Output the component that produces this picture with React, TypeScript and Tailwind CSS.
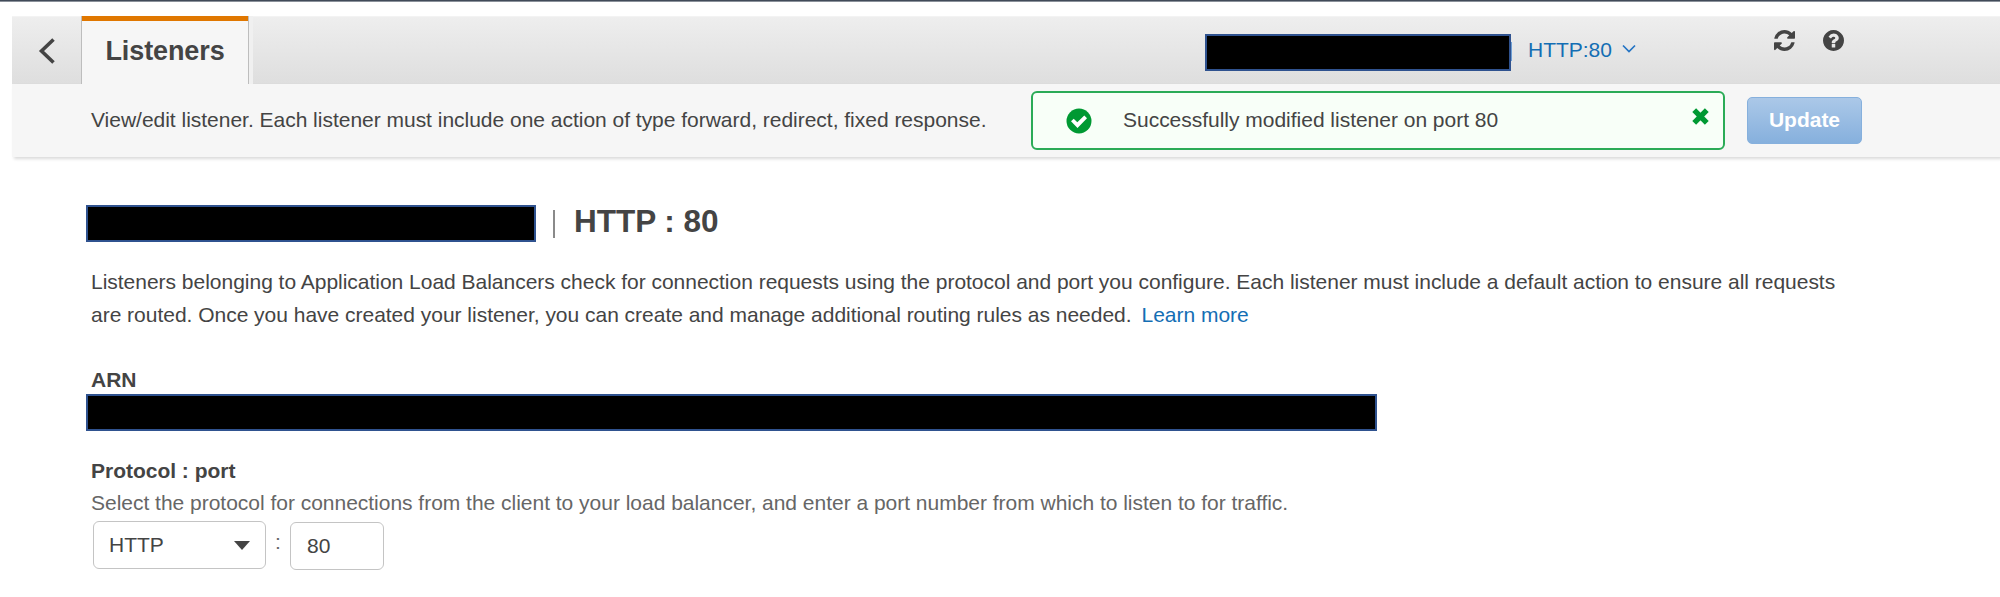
import React from "react";

function Redacted({ className }: { className: string }) {
  return <div className={`h-[37px] shrink-0 border-2 border-[#2f528f] bg-black ${className}`} />;
}

function RefreshIcon() {
  return (
    <svg className="size-[21px]" viewBox="0 0 1536 1536" fill="#444">
      <path d="M1511 928q0 5-1 7-64 268-268 434.500T764 1536q-146 0-282.500-55T238 1324l-129 129q-19 19-45 19t-45-19-19-45V960q0-26 19-45t45-19h448q26 0 45 19t19 45-19 45l-137 137q71 66 161 102t187 36q134 0 250-65t186-179q11-17 53-117 8-23 30-23h192q13 0 22.500 9.500t9.500 22.500zm25-800v448q0 26-19 45t-45 19h-448q-26 0-45-19t-19-45 19-45l138-138Q969 256 768 256q-134 0-250 65T332 500q-11 17-53 117-8 23-30 23H50q-13 0-22.500-9.500T18 608v-7q65-268 270-434.500T768 0q146 0 284 55.500T1297 212l130-129q19-19 45-19t45 19 19 45z" />
    </svg>
  );
}

function HelpIcon() {
  return (
    <svg className="size-[21px]" viewBox="0 0 1536 1536" fill="#444">
      <path d="M896 1248v-192q0-14-9-23t-23-9H672q-14 0-23 9t-9 23v192q0 14 9 23t23 9h192q14 0 23-9t9-23zm256-672q0-88-55.500-163T958 297t-170-41q-243 0-371 213-15 24 8 42l132 100q7 6 19 6 16 0 25-12 53-68 86-92 34-24 86-24 48 0 85.500 26t37.500 59q0 38-20 61t-68 45q-63 28-115.500 86.500T640 892v36q0 14 9 23t23 9h192q14 0 23-9t9-23q0-19 21.500-49.500T972 829q32-18 49-28.500t46-35 44.500-48 28-60.500 12.500-81zm384 192q0 209-103 385.500T1153.500 1433 768 1536t-385.500-103T103 1153.500 0 768t103-385.500T382.500 103 768 0t385.500 103T1433 382.500 1536 768z" />
    </svg>
  );
}

function Header() {
  return (
    <div className="flex h-[68px] border-t border-[#f3f3f3] bg-linear-to-b from-[#eeeeee] to-[#dedede]">
      <button className="flex h-[67px] w-[69px] items-center justify-center">
        <svg className="mt-px ml-[2px] size-[26px]" viewBox="0 0 26 26" fill="none" stroke="#444" strokeWidth="3.6">
          <path d="M18.500 1.500 6.500 13l12 11.500" />
        </svg>
      </button>
      <div className="-mt-px flex h-[68px] w-[168px] justify-center border-x border-x-[#bdbdbd] bg-[#f6f6f6]">
        <div className="flex w-full items-center justify-center border-t-[5px] border-[#e07700] pb-[4px]">
          <h1 className="text-[27px] leading-[34px] font-bold tracking-[-0.1px] text-[#444]">Listeners</h1>
        </div>
      </div>
      <div className="-mt-px h-[68px] w-1 bg-[#f0f0f0]" />
      <div className="ml-[952px] mt-[17px] flex h-[37px] items-start">
        <Redacted className="w-[306px]" />
        <div className="mt-2 h-[19px] w-px bg-[#6f9fd4]" />
        <a className="ml-4 mt-[3px] text-[21px] leading-[26px] text-[#146eb4]">HTTP:80</a>
        <svg className="ml-[10px] mt-[10px] h-[10px] w-[14px]" viewBox="0 0 14 10" fill="none" stroke="#2474c4" strokeWidth="1.700">
          <path d="M1 1.500l6 6 6-6" />
        </svg>
      </div>
      <div className="ml-[138px] mt-[13px] flex gap-[28px]">
        <RefreshIcon />
        <HelpIcon />
      </div>
    </div>
  );
}

function Toolbar() {
  return (
    <div className="flex h-[73px] items-start bg-[#f6f6f6] shadow-[2px_2px_3px_rgba(0,0,0,0.15)]">
      <p className="ml-[79px] mt-[23px] w-[940px] text-[21px] leading-[26px]">
        <span>View/edit listener. Each listener must include one action of type forward, redirect, fixed response.</span>
      </p>
      <div className="mt-[7px] flex h-[59px] w-[694px] items-start rounded-[6px] border-2 border-[#2bab57] bg-[#f8fff8]">
        <svg className="ml-[33px] mt-[15px] size-[26px]" viewBox="0 0 26 26">
          <circle cx="13" cy="13" r="12.500" fill="#009933" />
          <path d="M5 13.200l2.700-2.500 3.600 3.500 7-6.600 2.700 2.700-9.500 9.700z" fill="#fff" />
        </svg>
        <p className="ml-[31px] mt-[14px] w-[570px] text-[21px] leading-[26px]">Successfully modified listener on port 80</p>
        <svg className="-ml-px mt-[15px] size-[17px]" viewBox="0 0 17 17" stroke="#009933" strokeWidth="5.400">
          <path d="M2.200 2.200l12.600 12.600M14.800 2.200L2.200 14.800" />
        </svg>
      </div>
      <button className="ml-[22px] mt-[13px] flex h-[47px] w-[115px] items-center justify-center rounded-[5px] border border-[#86b0dd] bg-linear-to-b from-[#abc8e8] to-[#86b0dd] pb-0.5 text-[21px] font-bold text-white">
        Update
      </button>
    </div>
  );
}

export default function App() {
  return (
    <div className="h-[597px] w-[2000px] overflow-hidden bg-white font-['Liberation_Sans',Arial,sans-serif] tracking-[-0.018px] text-[#444]">
      <div className="h-0.5 border-b border-[#8a919a] bg-[#414b59]" />
      <div className="mt-[14px] ml-3">
        <Header />
        <Toolbar />
      </div>
      <main className="pl-[86px]">
        <div className="mt-12 flex h-[37px] items-start">
          <Redacted className="w-[450px]" />
          <div className="mt-[5px] ml-[17px] h-[28px] w-[2px] bg-[#8a8a8a]" />
          <h2 className="ml-[19px] -mt-[2px] text-[31.5px] leading-[37px] font-bold">HTTP : 80</h2>
        </div>
        <p className="mt-[23px] ml-[5px] w-[1780px] text-[21px] leading-[33px]">
          <span>Listeners belonging to Application Load Balancers check for connection requests using the protocol and port you configure. Each listener must include a default action to ensure all requests</span>
          <br />
          <span>are routed. Once you have created your listener, you can create and manage additional routing rules as needed.</span>
          <a className="ml-[10px] text-[#146eb4]">Learn more</a>
        </p>
        <h3 className="mt-[36px] mb-px ml-[5px] text-[21px] leading-[26px] font-bold">ARN</h3>
        <Redacted className="w-[1291px]" />
        <h3 className="mt-[27px] ml-[5px] text-[21px] leading-[26px] font-bold">Protocol : port</h3>
        <p className="mt-[6px] ml-[5px] text-[21px] leading-[26px] text-[#666]">
          Select the protocol for connections from the client to your load balancer, and enter a port number from which to listen to for traffic.
        </p>
        <div className="mt-[5px] ml-[7px] flex items-start">
          <div className="flex h-[48px] w-[173px] items-center justify-between rounded-[6px] border border-[#c4c4c4] pr-[15px] pl-[15px] text-[21px]">
            <span>HTTP</span>
            <svg className="h-[9px] w-[16px]" viewBox="0 0 16 9" fill="#444">
              <path d="M0 0h16L8 9z" />
            </svg>
          </div>
          <span className="ml-[9px] mt-[8px] w-[15px] text-[21px] leading-[26px] text-[#666]">:</span>
          <div className="mt-[1px] flex h-[48px] w-[94px] items-center rounded-[6px] border border-[#c4c4c4] pl-[16px] text-[21px]">80</div>
        </div>
      </main>
    </div>
  );
}
